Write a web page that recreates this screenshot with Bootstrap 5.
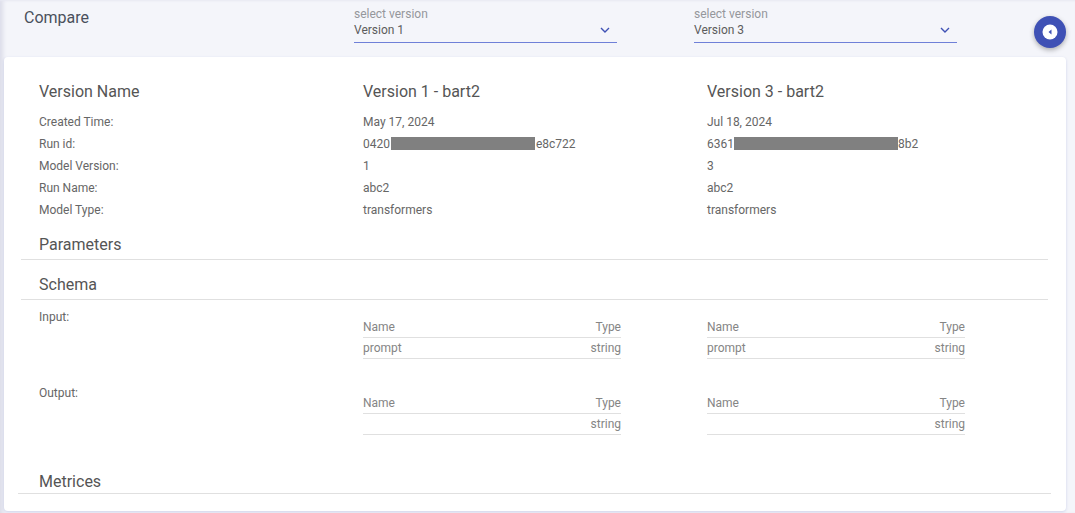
<!DOCTYPE html>
<html lang="en">
<head>
<meta charset="utf-8">
<title>Compare</title>
<link href="https://cdn.jsdelivr.net/npm/bootstrap@5.3.0/dist/css/bootstrap.min.css" rel="stylesheet">
<style>
html,body{height:513px;overflow:hidden}
body{background:#f4f5fa;font-family:Roboto,"Liberation Sans",sans-serif;color:#666;font-size:12px;position:relative;box-shadow:inset 5px 0 4px -2px #dcdde9}
.topbar{height:57px;box-shadow:inset 0 2px 2px -1px #e8e9f3}
.topbar-title{width:354px;padding:8px 0 0 24px;font-size:16px;line-height:20px;color:#4a505c}
.picker{width:263px;height:43px;padding-top:7px;border-bottom:1px solid #6f80d8;position:relative}
.picker-gap{width:77px}
.picker-label{color:#95979c;line-height:14px}
.picker-value{color:#5c5c5c;line-height:18px}
.picker svg{position:absolute;right:7px;top:27px}
.sheet{margin:0 9px 0 4px;height:454px;background:#fff;border-radius:4px;box-shadow:0 1px 3px rgba(63,81,181,.2);padding-top:23px}
.cmp-row{display:flex;padding-left:35px;line-height:22px}
.cmp-a{width:324px}
.cmp-b{width:344px}
.cmp-head{font-size:16px;line-height:24px;margin-bottom:7px;color:#555}
.section-title{font-size:16px;line-height:24px;padding-left:35px;color:#555}
.params-title{margin-top:12px}
.section-rule{margin:2px 18px 13px 17px;border-top:1px solid #e0e0e0}
.schema-rule{margin-bottom:6px}
.mini-wrap{padding-top:11px}
.output-row{margin-top:23px}
.metric-title{margin-top:35px;line-height:23px}
.metric-rule{margin:0 15px 0 14px;border-top:1px solid #e0e0e0}
.redact{display:inline-block;background:#808080;height:13px;vertical-align:-2px;margin:0 1px}
.redact-wide{margin:0}
.mini{width:258px;color:#858585}
.mini-row{display:flex;justify-content:space-between;height:21px;line-height:20px;border-bottom:1px solid #e0e0e0}
.fab{position:absolute;left:1034px;top:16px;width:32px;height:32px;border-radius:50%;background:#3f51b5;box-shadow:0 2px 5px rgba(0,0,0,.3);display:flex;align-items:center;justify-content:center}
</style>
</head>
<body>
<div class="topbar d-flex">
  <div class="topbar-title">Compare</div>
  <div class="picker">
    <div class="picker-label">select version</div>
    <div class="picker-value">Version 1</div>
    <svg width="10" height="6" viewBox="0 0 10 6"><path d="M1 1l4 4 4-4" fill="none" stroke="#3f51b5" stroke-width="1.4"/></svg>
  </div>
  <div class="picker-gap"></div>
  <div class="picker">
    <div class="picker-label">select version</div>
    <div class="picker-value">Version 3</div>
    <svg width="10" height="6" viewBox="0 0 10 6"><path d="M1 1l4 4 4-4" fill="none" stroke="#3f51b5" stroke-width="1.4"/></svg>
  </div>
</div>
<div class="sheet">
  <div class="cmp-row cmp-head"><div class="cmp-a">Version Name</div><div class="cmp-b">Version 1 - bart2</div><div class="cmp-b">Version 3 - bart2</div></div>
  <div class="cmp-row"><div class="cmp-a">Created Time:</div><div class="cmp-b">May 17, 2024</div><div class="cmp-b">Jul 18, 2024</div></div>
  <div class="cmp-row"><div class="cmp-a">Run id:</div><div class="cmp-b">0420<span class="redact" style="width:144px"></span>e8c722</div><div class="cmp-b">6361<span class="redact redact-wide" style="width:164px"></span>8b2</div></div>
  <div class="cmp-row"><div class="cmp-a">Model Version:</div><div class="cmp-b">1</div><div class="cmp-b">3</div></div>
  <div class="cmp-row"><div class="cmp-a">Run Name:</div><div class="cmp-b">abc2</div><div class="cmp-b">abc2</div></div>
  <div class="cmp-row"><div class="cmp-a">Model Type:</div><div class="cmp-b">transformers</div><div class="cmp-b">transformers</div></div>
  <div class="section-title params-title">Parameters</div>
  <div class="section-rule"></div>
  <div class="section-title">Schema</div>
  <div class="section-rule schema-rule"></div>
  <div class="cmp-row">
    <div class="cmp-a">Input:</div>
    <div class="cmp-b mini-wrap"><div class="mini"><div class="mini-row"><span>Name</span><span>Type</span></div><div class="mini-row"><span>prompt</span><span>string</span></div></div></div>
    <div class="cmp-b mini-wrap"><div class="mini"><div class="mini-row"><span>Name</span><span>Type</span></div><div class="mini-row"><span>prompt</span><span>string</span></div></div></div>
  </div>
  <div class="cmp-row output-row">
    <div class="cmp-a">Output:</div>
    <div class="cmp-b mini-wrap"><div class="mini"><div class="mini-row"><span>Name</span><span>Type</span></div><div class="mini-row"><span></span><span>string</span></div></div></div>
    <div class="cmp-b mini-wrap"><div class="mini"><div class="mini-row"><span>Name</span><span>Type</span></div><div class="mini-row"><span></span><span>string</span></div></div></div>
  </div>
  <div class="section-title metric-title">Metrices</div>
  <div class="metric-rule"></div>
</div>
<div class="fab"><svg width="18" height="18" viewBox="0 0 18 18"><circle cx="9" cy="9" r="7.5" fill="#fff"/><path d="M10.5 6.5v5L7.5 9z" fill="#3f51b5"/></svg></div>
<script src="https://cdn.jsdelivr.net/npm/bootstrap@5.3.0/dist/js/bootstrap.bundle.min.js"></script>
</body>
</html>
